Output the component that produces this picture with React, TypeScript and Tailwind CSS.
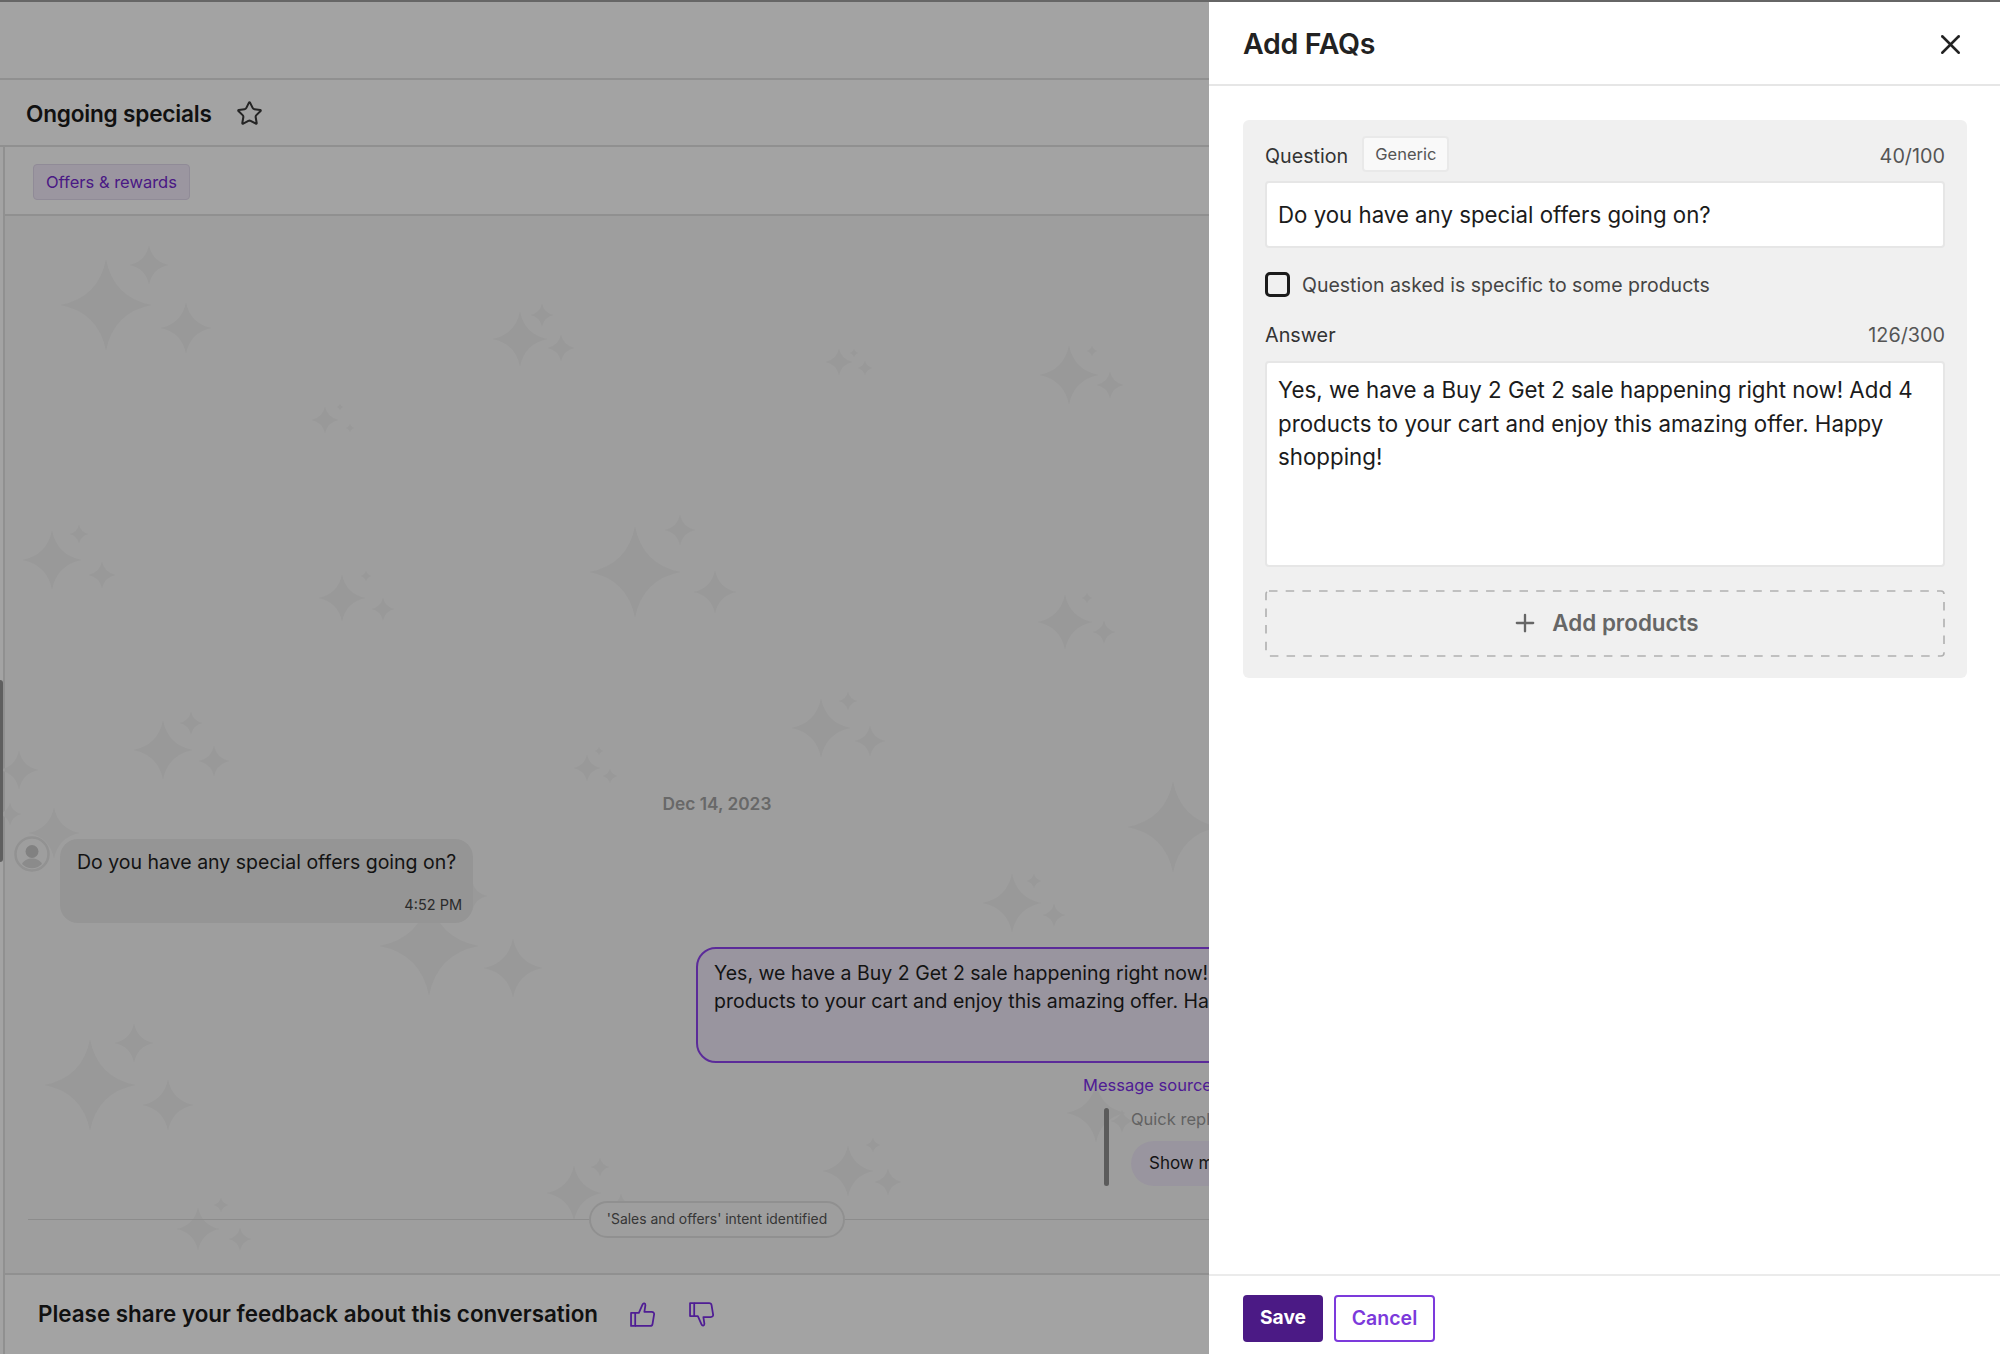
import { Plus, Star, X } from "lucide-react";

// [x, y, radius] of every sparkle in the chat wallpaper
const sparkles: number[][] = [
  [106, 304, 46], [149, 264, 20], [186, 327, 26],
  [520, 338, 28], [542, 314, 12], [561, 347, 14],
  [839, 361, 14], [865, 367, 8], [854, 352, 5],
  [1069, 374, 30], [1110, 384, 14], [1092, 350, 6],
  [325, 419, 14], [350, 427, 5], [340, 406, 4],
  [52, 559, 30], [79, 533, 10], [102, 574, 14],
  [635, 571, 46], [680, 529, 16], [715, 591, 22],
  [342, 597, 24], [366, 575, 6], [383, 608, 12],
  [1065, 621, 28], [1087, 597, 6], [1104, 631, 12],
  [163, 749, 30], [191, 722, 12], [214, 760, 16],
  [821, 727, 30], [848, 700, 10], [870, 740, 16],
  [587, 767, 14], [599, 750, 5], [610, 775, 8],
  [19, 769, 20], [10, 813, 12],
  [1173, 826, 46], [54, 832, 26],
  [1012, 902, 30], [1034, 880, 8], [1054, 914, 12],
  [429, 945, 50], [472, 895, 16], [513, 967, 30],
  [90, 1084, 46], [134, 1042, 20], [168, 1104, 26],
  [574, 1192, 28], [600, 1166, 10], [621, 1206, 14],
  [848, 1170, 26], [873, 1144, 8], [888, 1181, 14],
  [198, 1228, 22], [221, 1204, 8], [240, 1238, 12],
  [1096, 1112, 30], [1122, 1120, 12],
];

function Thumb({ down, className }: { down?: boolean; className: string }) {
  return (
    <svg
      className={`${className} ${down ? "-scale-y-100" : ""}`}
      viewBox="0 0 24 24"
      fill="none"
      stroke="currentColor"
      strokeWidth="1.7"
      strokeLinejoin="round"
    >
      <path d="M1 10.5h4V23H1z" />
      <path d="M5 10.5h3.5L12 2.5c.8-1.8 2.8-1.4 2.8.6L13.8 9.5h7c1.8 0 2.6 1.2 2.3 2.7l-1.5 9c-.2 1.2-1 1.8-2.2 1.8H5" />
    </svg>
  );
}

export default function App() {
  return (
    <div className="flex h-[1354px] w-[2000px] flex-col overflow-hidden bg-white font-['Inter',sans-serif]">
      <div className="h-[2px] shrink-0 bg-[#666666]" />
      <div className="relative flex min-h-0 flex-1 flex-col">
        <div className="h-[78px] shrink-0 border-b-2 border-[#e2e2e2]" />

        {/* Title */}
        <div className="flex h-[67px] shrink-0 items-center gap-[24px] border-b-2 border-[#e2e2e2] pl-[26px] pt-[2px]">
          <h1 className="text-[22.6px] font-semibold tracking-[-0.2px] text-[#1b1b1b]">Ongoing specials</h1>
          <Star className="size-[27px] text-[#3a3a3a]" strokeWidth={1.8} />
        </div>

        <div className="ml-[3px] flex min-h-0 flex-1 flex-col border-l-2 border-[#e2e2e2]">
          <div className="flex h-[69px] shrink-0 items-start border-b-2 border-[#e2e2e2] pl-[28px] pt-[17px]">
            <span className="flex h-[36px] items-center rounded-[4px] border border-[#e2d9ec] bg-[#f3ebfa] px-[12px] text-[16.5px] text-[#7329cf]">
              Offers &amp; rewards
            </span>
          </div>

          {/* Chat */}
          <div className="relative min-h-0 flex-1 bg-[#f8f8f8]">
            <svg className="absolute left-[-5px] top-[-215px] h-[1354px] w-[1300px]" viewBox="0 0 1300 1354">
              {sparkles.map(([x, y, r], i) => (
                <path
                  key={i}
                  fill="#f0f0f0"
                  transform={`translate(${x} ${y}) scale(${r})`}
                  d="M0 -1 Q.16 -.16 1 0 Q.16 .16 0 1 Q-.16 .16 -1 0 Q-.16 -.16 0 -1Z"
                />
              ))}
            </svg>

            <div className="relative flex h-full w-[1428px] flex-col pt-[575px]">
              <p className="pr-[4px] text-center text-[17.3px] font-semibold leading-[26px] text-[#a3a3a3]">Dec 14, 2023</p>

              <div className="mt-[22px] flex items-start gap-[10px] pl-[9px]">
                <svg className="mt-[-3px] size-[36px]" viewBox="0 0 36 36">
                  <circle cx="18" cy="18" r="16.5" fill="none" stroke="#e4e4e4" strokeWidth="2.5" />
                  <circle cx="18" cy="15.5" r="6.5" fill="#cacaca" />
                  <path d="M8 28c2-4 6-5.5 10-5.5s8 1.500 10 5.500a14 14 0 0 1-20 0Z" fill="#dadada" />
                </svg>
                <div className="flex h-[84px] w-[413px] flex-col rounded-[18px] bg-[#e9e9e9] pl-[17px] pr-[11px] pt-[11px]">
                  <p className="text-[19.5px] leading-[24px] text-[#1f1f1f]">Do you have any special offers going on?</p>
                  <p className="mt-[23px] self-end text-[14.5px] leading-[16px] text-[#444444]">4:52 PM</p>
                </div>
              </div>

              <div className="mr-[8px] mt-[24px] flex h-[116px] w-[729px] self-end rounded-[20px] border-2 border-[#8f44f0] bg-[#f0eaf9] pl-[16px] pr-[80px] pt-[10px]">
                <p className="text-[19.5px] leading-[28px] text-[#1f1f1f]">
                  Yes, we have a Buy 2 Get 2 sale happening right now! Add 4 products to your cart and enjoy this amazing offer. Happy shopping!
                </p>
              </div>

              <p className="ml-[1078px] mt-[10px] text-[16.5px] leading-[24px] text-[#7c2ee8]">Message source</p>

              <div className="ml-[1099px] mt-[11px] flex gap-[22px]">
                <div className="h-[78px] w-[5px] rounded-full bg-[#8f8f8f]" />
                <div className="flex flex-col items-start">
                  <p className="text-[16.5px] leading-[22px] text-[#9a9a9a]">Quick replies</p>
                  <span className="mt-[11px] flex h-[45px] items-center rounded-full bg-[#f0eaf9] px-[18px] text-[17px] text-[#1f1f1f]">
                    Show more
                  </span>
                </div>
              </div>

              <div className="mt-[15px] flex items-center pl-[23px] pr-[27px]">
                <div className="h-px flex-1 bg-[#dcdcdc]" />
                <span className="flex h-[37px] w-[256px] items-center justify-center rounded-full border-2 border-[#e2e2e2] bg-[#f8f8f8] text-[13.9px] text-[#555555]">
                  &#39;Sales and offers&#39; intent identified
                </span>
                <div className="h-px flex-1 bg-[#dcdcdc]" />
              </div>
            </div>
          </div>

          {/* Feedback */}
          <div className="flex h-[81px] shrink-0 items-center border-t-2 border-[#e2e2e2] bg-white pb-[1px] pl-[33px]">
            <p className="text-[22.4px] font-semibold text-[#1b1b1b]">Please share your feedback about this conversation</p>
            <Thumb className="ml-[32px] size-[25px] text-[#7c2ee8]" />
            <Thumb down className="ml-[34px] size-[25px] text-[#7c2ee8]" />
          </div>
        </div>

        {/* Backdrop */}
        <div className="absolute inset-0 bg-black/[.36]" />

        {/* Scrollbar handle */}
        <div className="absolute left-0 top-[678px] h-[182px] w-[3px] rounded-r-sm bg-[#5f5f5f]" />

        {/* Drawer */}
        <aside className="absolute bottom-0 right-0 top-0 flex w-[791px] flex-col bg-white">
          <header className="flex h-[84px] shrink-0 items-center justify-between border-b-2 border-[#e6e6e6] pl-[34px] pr-[33px] pt-[2px]">
            <h2 className="text-[28.5px] font-semibold tracking-[-0.3px] text-[#222222]">Add FAQs</h2>
            <X className="size-[33px] text-[#222222]" strokeWidth={1.8} />
          </header>

          <div className="flex-1 pl-[34px] pr-[33px] pt-[34px]">
            <div className="flex flex-col rounded-[6px] bg-[#f0f0f0] px-[22px] pb-[21px] pt-[16px]">
              <div className="flex h-[36px] items-start">
                <span className="pt-[6px] text-[19.7px] leading-[28px] text-[#333333]">Question</span>
                <span className="ml-[14px] flex h-[36px] items-center rounded-[4px] border-2 border-[#e9e9e9] bg-[#f9f9f9] px-[11px] text-[16.5px] text-[#555555]">
                  Generic
                </span>
                <span className="ml-auto pt-[6px] text-[19.8px] leading-[28px] text-[#555555]">40/100</span>
              </div>

              <input
                readOnly
                value="Do you have any special offers going on?"
                className="mt-[9px] h-[67px] w-full rounded-[4px] border-2 border-[#e6e6e6] bg-white px-[11px] text-[22.25px] text-[#1b1b1b] outline-none"
              />

              <label className="mt-[24px] flex h-[25px] items-center gap-[12px]">
                <span className="size-[25px] rounded-[5px] border-[3px] border-[#1b1b1b] bg-transparent" />
                <span className="pt-[2px] text-[19.5px] text-[#444444]">Question asked is specific to some products</span>
              </label>

              <div className="mt-[26px] flex h-[24px] items-center justify-between pt-[2px]">
                <span className="text-[19.8px] text-[#333333]">Answer</span>
                <span className="text-[19.8px] text-[#555555]">126/300</span>
              </div>

              <textarea
                readOnly
                value="Yes, we have a Buy 2 Get 2 sale happening right now! Add 4 products to your cart and enjoy this amazing offer. Happy shopping!"
                className="mt-[14px] h-[206px] w-full resize-none rounded-[4px] border-2 border-[#e6e6e6] bg-white px-[11px] pt-[10px] text-[22.3px] leading-[33.5px] text-[#1b1b1b] outline-none"
              />

              <div className="relative mt-[23px] flex h-[67px] items-center justify-center gap-[13px] pb-[1px] text-[#666666]">
                <svg className="absolute inset-0 h-full w-full" fill="none">
                  <rect x="1" y="1" width="678" height="65" rx="3" stroke="#b0b0b0" strokeWidth="1.6" strokeDasharray="8.5 8.2" />
                </svg>
                <Plus className="size-[28px]" strokeWidth={2} />
                <span className="text-[22.4px] font-semibold">Add products</span>
              </div>
            </div>
          </div>

          <footer className="flex h-[80px] shrink-0 items-start gap-[11px] border-t-2 border-[#ebebeb] pl-[34px] pt-[19px]">
            <button className="h-[47px] w-[80px] rounded-[4px] bg-[#4b1a85] pb-[2px] text-[19.2px] font-bold text-white">Save</button>
            <button className="h-[47px] w-[101px] rounded-[4px] border-2 border-[#7c3adb] bg-white text-[19.5px] font-semibold text-[#7c3adb]">Cancel</button>
          </footer>
        </aside>
      </div>
    </div>
  );
}
